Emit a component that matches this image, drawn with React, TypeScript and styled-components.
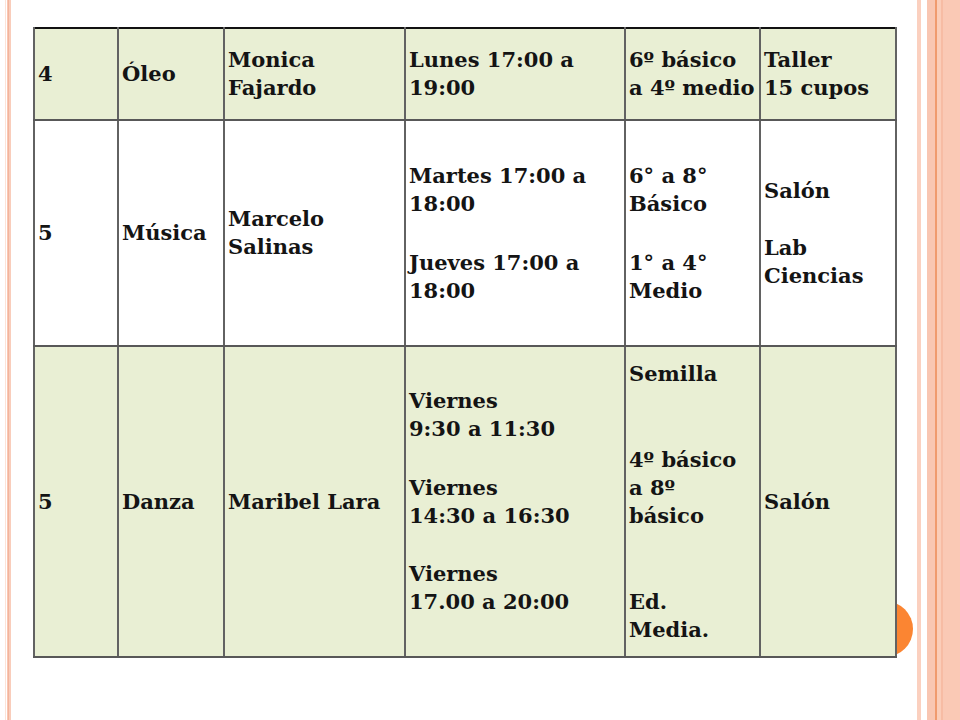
import React from "react";
import styled, { createGlobalStyle } from "styled-components";

const Global = createGlobalStyle`
  html, body { margin: 0; padding: 0; background: #fff; }
  #root { width: 960px; height: 720px; }
`;

const Slide = styled.div`
  position: relative;
  width: 960px;
  height: 720px;
  overflow: hidden;
  box-sizing: border-box;
  padding: 27px 0 0 33px;
  background:
    linear-gradient(to right,
      transparent 0, transparent 5px,
      #fde3d8 5px, #fde3d8 6px,
      transparent 6px, transparent 7px,
      #f8c7b3 7px, #f8c7b3 8px,
      #f3b49c 8px, #f3b49c 9px,
      #f9cdbb 9px, #f9cdbb 11px,
      transparent 11px, transparent 917px,
      #fbd0bf 917px, #fbd0bf 921px,
      transparent 921px, transparent 927px,
      #f9c6b2 927px, #f9c6b2 935px,
      #f09a6e 935px, #f09a6e 937px,
      #fbcdb9 937px, #fbcdb9 941px,
      #f7bca4 941px, #f7bca4 943px,
      #fac9b5 943px, #fac9b5 960px);
`;

const Circle = styled.div`
  position: absolute;
  left: 857px;
  top: 601px;
  width: 56px;
  height: 56px;
  border-radius: 50%;
  background: #fb8532;
  z-index: 0;
`;

const Table = styled.table`
  position: relative;
  z-index: 1;
  border-collapse: collapse;
  table-layout: fixed;
  width: 862px;
  font-family: "DejaVu Serif", "Liberation Serif", serif;
  font-weight: bold;
  font-size: 21px;
  line-height: 28px;
  color: #141414;
  border-top: 2px solid #111;
`;

const Row = styled.tr<{ $tint: boolean; $h: number }>`
  height: ${(p) => p.$h}px;
  background: ${(p) => (p.$tint ? "#e9efd4" : "#ffffff")};
`;

const Cell = styled.td`
  border-left: 2px solid #626262;
  border-right: 2px solid #626262;
  border-bottom: 2px solid #585858;
  padding: 0 2px 0 3px;
  vertical-align: middle;
  overflow: hidden;
  white-space: nowrap;
`;

const Para = styled.div<{ $gap?: number }>`
  margin-top: ${(p) => p.$gap ?? 0}px;
`;

type Block = { lines: string[]; gap?: number };

const widths = [84, 106, 181, 220, 135, 136];

const rows: { tint: boolean; h: number; cells: Block[][] }[] = [
  {
    tint: true,
    h: 92,
    cells: [
      [{ lines: ["4"] }],
      [{ lines: ["Óleo"] }],
      [{ lines: ["Monica", "Fajardo"] }],
      [{ lines: ["Lunes 17:00 a", "19:00"] }],
      [{ lines: ["6º básico", "a 4º medio"] }],
      [{ lines: ["Taller", "15 cupos"] }],
    ],
  },
  {
    tint: false,
    h: 226,
    cells: [
      [{ lines: ["5"] }],
      [{ lines: ["Música"] }],
      [{ lines: ["Marcelo", "Salinas"] }],
      [
        { lines: ["Martes 17:00 a", "18:00"] },
        { lines: ["Jueves 17:00 a", "18:00"], gap: 31 },
      ],
      [
        { lines: ["6° a 8°", "Básico"] },
        { lines: ["1° a 4°", "Medio"], gap: 31 },
      ],
      [{ lines: ["Salón"] }, { lines: ["Lab", "Ciencias"], gap: 29 }],
    ],
  },
  {
    tint: true,
    h: 311,
    cells: [
      [{ lines: ["5"] }],
      [{ lines: ["Danza"] }],
      [{ lines: ["Maribel Lara"] }],
      [
        { lines: ["Viernes", "9:30 a 11:30"] },
        { lines: ["Viernes", "14:30 a 16:30"], gap: 31 },
        { lines: ["Viernes", "17.00 a 20:00"], gap: 30 },
      ],
      [
        { lines: ["Semilla"] },
        { lines: ["4º básico", "a 8º", "básico"], gap: 58 },
        { lines: ["Ed.", "Media."], gap: 58 },
      ],
      [{ lines: ["Salón"] }],
    ],
  },
];

export default function App() {
  return (
    <>
      <Global />
      <Slide>
        <Circle />
        <Table>
          <colgroup>
            {widths.map((w, i) => (
              <col key={i} style={{ width: w }} />
            ))}
          </colgroup>
          <tbody>
            {rows.map((r, ri) => (
              <Row key={ri} $tint={r.tint} $h={r.h}>
                {r.cells.map((blocks, ci) => (
                  <Cell key={ci}>
                    {blocks.map((b, bi) => (
                      <Para key={bi} $gap={b.gap}>
                        {b.lines.map((l, li) => (
                          <div key={li}>{l}</div>
                        ))}
                      </Para>
                    ))}
                  </Cell>
                ))}
              </Row>
            ))}
          </tbody>
        </Table>
      </Slide>
    </>
  );
}
